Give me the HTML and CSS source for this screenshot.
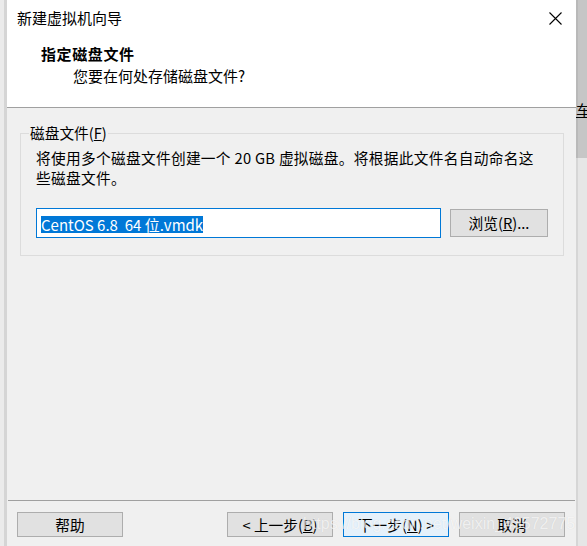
FILE: index.html
```html
<!DOCTYPE html>
<html lang="zh-CN">
<head>
    <meta charset="UTF-8">
    <meta name="viewport" content="width=device-width, initial-scale=1.0">
    <title>新建虚拟机向导</title>
    <link rel="stylesheet" href="styles.css">
</head>
<body>
    <div class="screen">
        <div class="edge-left"></div>

        <div class="wizard">
            <header class="wizard-head">
                <div class="titlebar">
                    <span class="title">新建虚拟机向导</span>
                    <button class="close" aria-label="关闭">
                        <svg width="13" height="13" viewBox="0 0 13 13">
                            <path d="M0.5 0.5 L12.5 12.5 M12.5 0.5 L0.5 12.5" stroke="#000" stroke-width="1.1" fill="none"/>
                        </svg>
                    </button>
                </div>
                <h1 class="step-title">指定磁盘文件</h1>
                <p class="step-desc">您要在何处存储磁盘文件?</p>
            </header>

            <main class="wizard-body">
                <fieldset class="group">
                    <legend>磁盘文件(<u>F</u>)</legend>
                    <p class="group-text">将使用多个磁盘文件创建一个 20 GB 虚拟磁盘。将根据此文件名自动命名这<br>些磁盘文件。</p>
                    <div class="file-row">
                        <div class="file-input"><span class="selected">CentOS 6.8  64 位.vmdk</span></div>
                        <button class="btn btn-browse">浏览(<u>R</u>)...</button>
                    </div>
                </fieldset>
            </main>

            <footer class="wizard-foot">
                <button class="btn">帮助</button>
                <div class="nav">
                    <button class="btn">&lt; 上一步(<u>B</u>)</button>
                    <button class="btn btn-default">下一步(<u>N</u>) &gt;</button>
                    <button class="btn">取消</button>
                </div>
            </footer>
        </div>

        <div class="edge-right">
            <div class="bg-window"><span class="bg-text">车</span></div>
        </div>

        <div class="watermark">https://blog.csdn.net/weixin_43572775</div>
    </div>
</body>
</html>
```

FILE: styles.css
```css
:root {
    --dialog-bg: #f0f0f0;
    --button-bg: #e1e1e1;
    --button-border: #adadad;
    --accent: #0078d7;
    --text-color: #000;
}

* {
    box-sizing: border-box;
}

body {
    margin: 0;
    padding: 0;
    font-family: 'Noto Sans CJK SC', 'Noto Sans', sans-serif;
    color: var(--text-color);
    background: var(--dialog-bg);
    overflow: hidden;
}

.screen {
    position: relative;
    display: flex;
    width: 587px;
    height: 546px;
}

.edge-left {
    width: 7px;
    background: linear-gradient(to right, #ebebeb 0 4px, #d5d5d5 4px);
}

.wizard {
    flex: 1;
    display: flex;
    flex-direction: column;
    background: var(--dialog-bg);
}

/* header */

.wizard-head {
    height: 108px;
    background: #fff;
    border-bottom: 1px solid #a0a0a0;
}

.titlebar {
    display: flex;
    justify-content: space-between;
    align-items: center;
    padding: 8px 14px 0 10px;
}

.title {
    font-size: 15px;
    line-height: 20px;
}

.close {
    display: flex;
    padding: 0;
    border: none;
    background: none;
    margin-top: 1px;
}

.step-title {
    margin: 16px 0 0 34px;
    font-size: 15px;
    font-weight: bold;
    line-height: 20px;
    letter-spacing: 0.6px;
}

.step-desc {
    margin: 2px 0 0 66px;
    font-size: 15px;
    line-height: 20px;
}

/* group box */

.wizard-body {
    padding: 17px 12px 0 13px;
}

.group {
    margin: 0;
    padding: 7px 15px 17px 15px;
    border: 1px solid #dcdcdc;
}

.group legend {
    margin-left: -7px;
    padding: 0 1px;
    font-size: 14.7px;
    line-height: 16px;
}

.group-text {
    margin: 0;
    font-size: 14.7px;
    line-height: 20px;
    letter-spacing: 0.3px;
}

.file-row {
    display: flex;
    align-items: center;
    gap: 9px;
    margin-top: 20px;
}

.file-input {
    width: 405px;
    height: 30px;
    padding: 3px 4px 0;
    background: #fff;
    border: 1px solid var(--accent);
}

.selected {
    display: inline-block;
    height: 17px;
    line-height: 17px;
    font-size: 15px;
    white-space: pre;
    color: #fff;
    background: var(--accent);
}

/* buttons */

.btn {
    width: 106px;
    height: 25px;
    padding: 0;
    font-family: inherit;
    font-size: 14.7px;
    line-height: 20px;
    color: var(--text-color);
    background: var(--button-bg);
    border: 1px solid var(--button-border);
    border-radius: 0;
}

.btn-browse {
    width: 98px;
    height: 28px;
}

.btn-default {
    background: #e5f1fb;
    border-color: var(--accent);
}

.wizard-foot {
    margin: auto 1px 0;
    display: flex;
    justify-content: space-between;
    padding: 11px 10px 9px 9px;
    border-top: 1px solid #a0a0a0;
}

.nav {
    display: flex;
    gap: 10px;
}

/* window behind the dialog */

.edge-right {
    width: 11px;
    display: flex;
    flex-direction: column;
    background: linear-gradient(to right, #d6d6d6 0 2px, #e6e6e6 2px);
}

.bg-window {
    height: 158px;
    padding-top: 101px;
    overflow: hidden;
    background: linear-gradient(to right, #b9b9b9 0 2px, #c6c6c6 2px);
}

.bg-text {
    display: block;
    font-size: 15px;
    line-height: 17px;
    text-decoration: underline;
}

.watermark {
    position: absolute;
    left: 303px;
    top: 514px;
    font-family: 'Liberation Sans', sans-serif;
    font-size: 16px;
    line-height: 20px;
    color: rgba(255, 255, 255, 0.7);
    text-shadow: 0 0 1px rgba(0, 0, 0, 0.1);
    white-space: nowrap;
    pointer-events: none;
}
```
